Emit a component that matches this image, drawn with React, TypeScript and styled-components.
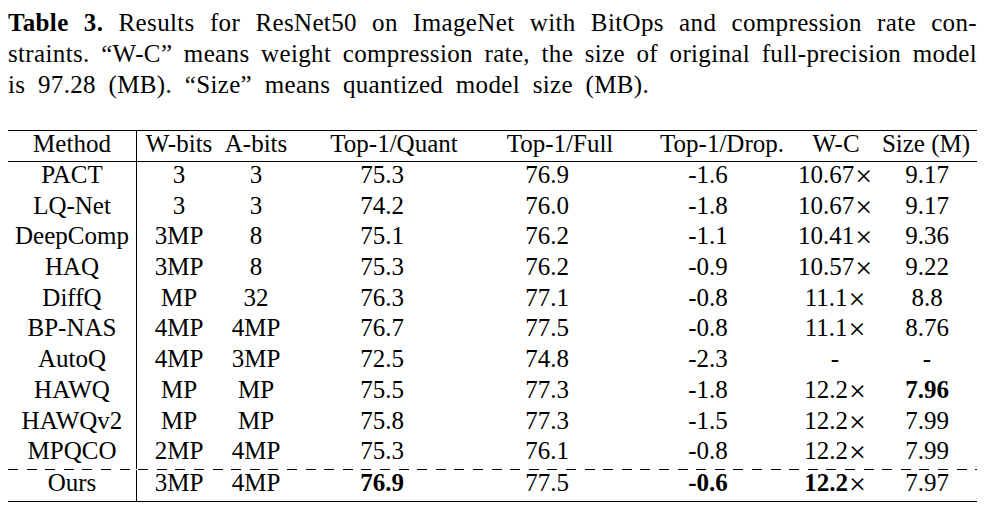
import React from "react";
import styled, {createGlobalStyle} from "styled-components";

const GlobalStyle = createGlobalStyle`
  html, body {
    margin: 0;
    padding: 0;
    background: #fff;
  }
  body {
    font-family: "Liberation Serif", "Times New Roman", serif;
    color: #000;
  }
`;

const Page = styled.div`
  width: 969px;
  padding: 7px 0 0 8px;
`;

const Caption = styled.div`
  font-size: 25px;
  line-height: 31px;
  letter-spacing: 0.35px;
`;

const CaptionLine = styled.div<{ $justify?: boolean }>`
  white-space: nowrap;
  text-align: ${props => props.$justify ? "justify" : "left"};
  text-align-last: ${props => props.$justify ? "justify" : "left"};
  word-spacing: ${props => props.$justify ? "0" : "6px"};
`;

const B = styled.b`
  font-weight: 700;
`;

const Cross = styled.span`
  display: inline-block;
  font-weight: 400;
  font-size: 1.2em;
  line-height: 26px;
  vertical-align: top;
  margin-left: 1px;
  transform: translateY(1px);
`;

const Table = styled.div`
  margin-top: 30px;
  border-top: 1px solid #000;
  border-bottom: 1px solid #000;
  font-size: 25px;
`;

const Row = styled.div<{ $height: number, $ruled?: boolean, $dashed?: boolean }>`
  display: grid;
  grid-template-columns: 129px 84px 70px 179px 160px 160px 90px 97px;
  height: ${props => props.$height}px;
  box-sizing: border-box;
  border-bottom: ${props => props.$ruled ? "1px solid #000" : "none"};
  padding-top: ${props => props.$dashed ? "1px" : "0"};
  background: ${props => props.$dashed
          ? "repeating-linear-gradient(to right, #000 0 10px, transparent 10px 18.6px) top left / 100% 1px no-repeat"
          : "none"};
`;

const Cell = styled.div<{ $shift: number, $divider?: boolean }>`
  line-height: 26px;
  text-align: center;
  white-space: nowrap;
  padding-left: ${props => Math.max(0, props.$shift * 2)}px;
  padding-right: ${props => Math.max(0, -props.$shift * 2)}px;
  border-right: ${props => props.$divider ? "1px solid #000" : "none"};
`;

type Col = { head: number, body: number };

// center offsets (px) per column, header and body differ like in the paper
const columns: Col[] = [
    {head: 0, body: 0},
    {head: 0, body: 0},
    {head: 0, body: 0},
    {head: 13.5, body: 1.5},
    {head: 10, body: -3},
    {head: 12, body: -2},
    {head: 1, body: 0},
    {head: -2.5, body: -1.5},
];

const Times = () => <Cross>×</Cross>;

const header = ["Method", "W-bits", "A-bits", "Top-1/Quant", "Top-1/Full", "Top-1/Drop.", "W-C", "Size (M)"];

const body: React.ReactNode[][] = [
    ["PACT", "3", "3", "75.3", "76.9", "-1.6", <>10.67<Times/></>, "9.17"],
    ["LQ-Net", "3", "3", "74.2", "76.0", "-1.8", <>10.67<Times/></>, "9.17"],
    ["DeepComp", "3MP", "8", "75.1", "76.2", "-1.1", <>10.41<Times/></>, "9.36"],
    ["HAQ", "3MP", "8", "75.3", "76.2", "-0.9", <>10.57<Times/></>, "9.22"],
    ["DiffQ", "MP", "32", "76.3", "77.1", "-0.8", <>11.1<Times/></>, "8.8"],
    ["BP-NAS", "4MP", "4MP", "76.7", "77.5", "-0.8", <>11.1<Times/></>, "8.76"],
    ["AutoQ", "4MP", "3MP", "72.5", "74.8", "-2.3", "-", "-"],
    ["HAWQ", "MP", "MP", "75.5", "77.3", "-1.8", <>12.2<Times/></>, <B>7.96</B>],
    ["HAWQv2", "MP", "MP", "75.8", "77.3", "-1.5", <>12.2<Times/></>, "7.99"],
    ["MPQCO", "2MP", "4MP", "75.3", "76.1", "-0.8", <>12.2<Times/></>, "7.99"],
];

const ours: React.ReactNode[] = [
    "Ours", "3MP", "4MP", <B>76.9</B>, "77.5", <B>-0.6</B>, <><B>12.2</B><Times/></>, "7.97",
];

const App = () => {
    return (
        <Page>
            <GlobalStyle/>
            <Caption>
                <CaptionLine $justify>
                    <B>Table 3.</B> Results for ResNet50 on ImageNet with BitOps and compression rate con-
                </CaptionLine>
                <CaptionLine $justify>
                    straints. “W-C” means weight compression rate, the size of original full-precision model
                </CaptionLine>
                <CaptionLine>
                    is 97.28 (MB). “Size” means quantized model size (MB).
                </CaptionLine>
            </Caption>
            <Table>
                <Row $height={31} $ruled>
                    {header.map((h, i) => (
                        <Cell key={i} $shift={columns[i].head} $divider={i === 0}>{h}</Cell>
                    ))}
                </Row>
                {body.map((r, ri) => (
                    <Row key={ri} $height={30.7}>
                        {r.map((c, i) => (
                            <Cell key={i} $shift={columns[i].body} $divider={i === 0}>{c}</Cell>
                        ))}
                    </Row>
                ))}
                <Row $height={31.7} $dashed>
                    {ours.map((c, i) => (
                        <Cell key={i} $shift={columns[i].body} $divider={i === 0}>{c}</Cell>
                    ))}
                </Row>
            </Table>
        </Page>
    );
};

export default App;
